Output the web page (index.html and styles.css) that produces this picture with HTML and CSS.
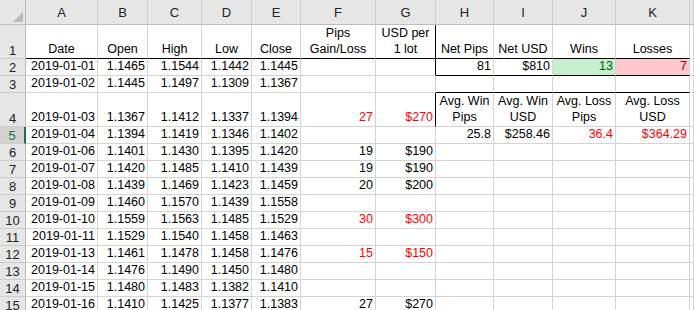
FILE: index.html
```html
<!DOCTYPE html>
<html>
<head>
<meta charset="utf-8">
<link rel="stylesheet" href="styles.css">
</head>
<body>
<table class="sheet">
<colgroup>
<col class="w-rh"><col class="w-a"><col class="w-b"><col class="w-c"><col class="w-d"><col class="w-e"><col class="w-f"><col class="w-g"><col class="w-h"><col class="w-i"><col class="w-j"><col class="w-k"><col class="w-l">
</colgroup>
<tr class="row-head">
<th class="corner"><span class="tri"></span></th>
<th class="ch">A</th><th class="ch">B</th><th class="ch">C</th><th class="ch">D</th><th class="ch">E</th><th class="ch">F</th><th class="ch">G</th><th class="ch">H</th><th class="ch">I</th><th class="ch">J</th><th class="ch">K</th><th class="ch"></th>
</tr>
<tr class="row-tall1">
<th class="rh">1</th>
<td class="c ul">Date</td><td class="c ul">Open</td><td class="c ul">High</td><td class="c ul">Low</td><td class="c ul">Close</td><td class="c ul wrap">Pips<br>Gain/Loss</td><td class="c ul wrap bl">USD per<br>1 lot</td><td class="c ul">Net Pips</td><td class="c ul">Net USD</td><td class="c ul">Wins</td><td class="c ul">Losses</td><td></td>
</tr>
<tr class="row">
<th class="rh">2</th>
<td>2019-01-01</td><td>1.1465</td><td>1.1544</td><td>1.1442</td><td>1.1445</td><td></td><td class="bl"></td><td class="ul">81</td><td class="ul">$810</td><td class="ul good">13</td><td class="ul bad">7</td><td></td>
</tr>
<tr class="row">
<th class="rh">3</th>
<td>2019-01-02</td><td>1.1445</td><td>1.1497</td><td>1.1309</td><td>1.1367</td><td></td><td></td><td class="ul"></td><td class="ul"></td><td class="ul"></td><td class="ul"></td><td></td>
</tr>
<tr class="row-tall4">
<th class="rh">4</th>
<td>2019-01-03</td><td>1.1367</td><td>1.1412</td><td>1.1337</td><td>1.1394</td><td class="red">27</td><td class="red bl">$270</td><td class="c wrap">Avg. Win<br>Pips</td><td class="c wrap">Avg. Win<br>USD</td><td class="c wrap">Avg. Loss<br>Pips</td><td class="c wrap">Avg. Loss<br>USD</td><td></td>
</tr>
<tr class="row">
<th class="rh sel">5</th>
<td>2019-01-04</td><td>1.1394</td><td>1.1419</td><td>1.1346</td><td>1.1402</td><td></td><td></td><td>25.8</td><td>$258.46</td><td class="red">36.4</td><td class="red">$364.29</td><td></td>
</tr>
<tr class="row">
<th class="rh">6</th>
<td>2019-01-06</td><td>1.1401</td><td>1.1430</td><td>1.1395</td><td>1.1420</td><td>19</td><td>$190</td><td></td><td></td><td></td><td></td><td></td>
</tr>
<tr class="row">
<th class="rh">7</th>
<td>2019-01-07</td><td>1.1420</td><td>1.1485</td><td>1.1410</td><td>1.1439</td><td>19</td><td>$190</td><td></td><td></td><td></td><td></td><td></td>
</tr>
<tr class="row">
<th class="rh">8</th>
<td>2019-01-08</td><td>1.1439</td><td>1.1469</td><td>1.1423</td><td>1.1459</td><td>20</td><td>$200</td><td></td><td></td><td></td><td></td><td></td>
</tr>
<tr class="row">
<th class="rh">9</th>
<td>2019-01-09</td><td>1.1460</td><td>1.1570</td><td>1.1439</td><td>1.1558</td><td></td><td></td><td></td><td></td><td></td><td></td><td></td>
</tr>
<tr class="row">
<th class="rh">10</th>
<td>2019-01-10</td><td>1.1559</td><td>1.1563</td><td>1.1485</td><td>1.1529</td><td class="red">30</td><td class="red">$300</td><td></td><td></td><td></td><td></td><td></td>
</tr>
<tr class="row">
<th class="rh">11</th>
<td>2019-01-11</td><td>1.1529</td><td>1.1540</td><td>1.1458</td><td>1.1463</td><td></td><td></td><td></td><td></td><td></td><td></td><td></td>
</tr>
<tr class="row">
<th class="rh">12</th>
<td>2019-01-13</td><td>1.1461</td><td>1.1478</td><td>1.1458</td><td>1.1476</td><td class="red">15</td><td class="red">$150</td><td></td><td></td><td></td><td></td><td></td>
</tr>
<tr class="row">
<th class="rh">13</th>
<td>2019-01-14</td><td>1.1476</td><td>1.1490</td><td>1.1450</td><td>1.1480</td><td></td><td></td><td></td><td></td><td></td><td></td><td></td>
</tr>
<tr class="row">
<th class="rh">14</th>
<td>2019-01-15</td><td>1.1480</td><td>1.1483</td><td>1.1382</td><td>1.1410</td><td></td><td></td><td></td><td></td><td></td><td></td><td></td>
</tr>
<tr class="row">
<th class="rh">15</th>
<td>2019-01-16</td><td>1.1410</td><td>1.1425</td><td>1.1377</td><td>1.1383</td><td>27</td><td>$270</td><td></td><td></td><td></td><td></td><td></td>
</tr>
</table>
</body>
</html>
```

FILE: styles.css
```css
html, body {
  margin: 0;
  padding: 0;
  background: #ffffff;
  overflow: hidden;
}

body {
  font-family: "Liberation Sans", Arial, sans-serif;
  font-size: 12.5px;
  color: #000000;
}

.sheet {
  border-collapse: separate;
  border-spacing: 0;
  table-layout: fixed;
  width: 694px;
}

.w-rh { width: 26px; }
.w-a { width: 72px; }
.w-b { width: 50px; }
.w-c { width: 54px; }
.w-d { width: 50px; }
.w-e { width: 49px; }
.w-f { width: 75px; }
.w-g { width: 60px; }
.w-h { width: 58px; }
.w-i { width: 59px; }
.w-j { width: 63px; }
.w-k { width: 74px; }
.w-l { width: 4px; }

.row-head { height: 25px; }
.row-tall1 { height: 34px; }
.row-tall4 { height: 32px; }
.row { height: 17px; }

.sheet td {
  box-sizing: border-box;
  padding: 0 2px 1px 2px;
  border-right: 1px solid #d4d4d4;
  border-bottom: 1px solid #d4d4d4;
  vertical-align: bottom;
  text-align: right;
  white-space: nowrap;
  overflow: hidden;
  line-height: 15px;
}

.sheet th {
  box-sizing: border-box;
  font-weight: normal;
  background: #e6e6e6;
  color: #222222;
  padding: 0;
  white-space: nowrap;
  overflow: hidden;
}

.ch {
  text-align: center;
  vertical-align: middle;
  font-size: 13px;
  padding-top: 1px;
  border-right: 1px solid #cdcdcd;
  border-bottom: 1px solid #bdbdbd;
}

.corner {
  text-align: right;
  vertical-align: bottom;
  border-right: 1px solid #bdbdbd;
  border-bottom: 1px solid #bdbdbd;
}

.corner .tri {
  display: inline-block;
  width: 0;
  height: 0;
  margin: 0 2px 2px 0;
  border-left: 10px solid transparent;
  border-bottom: 10px solid #b9b9b9;
  vertical-align: bottom;
}

.rh {
  text-align: center;
  vertical-align: bottom;
  font-size: 13px;
  line-height: 15px;
  border-right: 1px solid #bdbdbd;
  border-bottom: 1px solid #cdcdcd;
}

.rh.sel {
  color: #217346;
  background: #d2d2d2;
  border-right: 2px solid #217346;
}

.sheet td.c {
  text-align: center;
}

.sheet td.wrap {
  white-space: nowrap;
  line-height: 16px;
  padding-bottom: 1px;
}

.sheet td.ul {
  border-bottom: 1px solid #000000;
}

.sheet td.bl {
  border-right: 1px solid #000000;
}

.red {
  color: #ff0000;
}

.sheet td.good {
  background: #c6efce;
  color: #006100;
}

.sheet td.bad {
  background: #ffc7ce;
  color: #9c0006;
}
```
